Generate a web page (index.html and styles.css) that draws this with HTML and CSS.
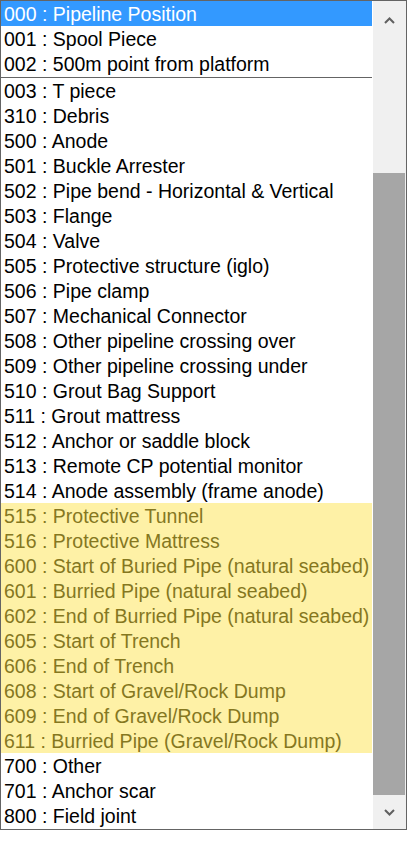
FILE: index.html
```html
<!DOCTYPE html>
<html lang="en">

<head>
    <meta charset="UTF-8">
    <meta name="viewport" content="width=device-width, initial-scale=1.0">
    <title>Event codes</title>
    <link rel="stylesheet" href="styles.css">
</head>

<body>
    <div class="listbox">
        <div class="items">
            <div class="top-group">
                <div class="row selected">000 : Pipeline Position</div>
                <div class="row">001 : Spool Piece</div>
                <div class="row">002 : 500m point from platform</div>
            </div>
            <div class="row">003 : T piece</div>
            <div class="row">310 : Debris</div>
            <div class="row">500 : Anode</div>
            <div class="row">501 : Buckle Arrester</div>
            <div class="row">502 : Pipe bend - Horizontal &amp; Vertical</div>
            <div class="row">503 : Flange</div>
            <div class="row">504 : Valve</div>
            <div class="row">505 : Protective structure (iglo)</div>
            <div class="row">506 : Pipe clamp</div>
            <div class="row">507 : Mechanical Connector</div>
            <div class="row">508 : Other pipeline crossing over</div>
            <div class="row">509 : Other pipeline crossing under</div>
            <div class="row">510 : Grout Bag Support</div>
            <div class="row">511 : Grout mattress</div>
            <div class="row">512 : Anchor or saddle block</div>
            <div class="row">513 : Remote CP potential monitor</div>
            <div class="row">514 : Anode assembly (frame anode)</div>
            <div class="row marked">515 : Protective Tunnel</div>
            <div class="row marked">516 : Protective Mattress</div>
            <div class="row marked">600 : Start of Buried Pipe (natural seabed)</div>
            <div class="row marked">601 : Burried Pipe (natural seabed)</div>
            <div class="row marked">602 : End of Burried Pipe (natural seabed)</div>
            <div class="row marked">605 : Start of Trench</div>
            <div class="row marked">606 : End of Trench</div>
            <div class="row marked">608 : Start of Gravel/Rock Dump</div>
            <div class="row marked">609 : End of Gravel/Rock Dump</div>
            <div class="row marked">611 : Burried Pipe (Gravel/Rock Dump)</div>
            <div class="row">700 : Other</div>
            <div class="row">701 : Anchor scar</div>
            <div class="row">800 : Field joint</div>
        </div>
        <div class="scrollbar">
            <div class="arrow up">
                <svg width="11" height="7" viewBox="0 0 11 7"><path d="M1 6 L5.5 1.5 L10 6" fill="none" stroke="#606060" stroke-width="2"/></svg>
            </div>
            <div class="track">
                <div class="thumb"></div>
            </div>
            <div class="arrow down">
                <svg width="11" height="7" viewBox="0 0 11 7"><path d="M1 1 L5.5 5.5 L10 1" fill="none" stroke="#606060" stroke-width="2"/></svg>
            </div>
        </div>
    </div>
</body>

</html>
```

FILE: styles.css
```css
* {
    margin: 0;
    padding: 0;
    box-sizing: border-box;
    font-family: "Liberation Sans", Arial, sans-serif;
}

body {
    background-color: #fff;
}

.listbox {
    display: flex;
    width: 407px;
    height: 830px;
    border: 1px solid #646464;
    background-color: #fff;
}

.items {
    width: 371px;
    display: flex;
    flex-direction: column;
}

.top-group {
    width: 372px;
    padding-bottom: 1px;
    border-bottom: 1px solid #646464;
}

.row {
    height: 25px;
    line-height: 23px;
    padding-top: 2px;
    padding-left: 3px;
    font-size: 19.5px;
    color: #000;
    white-space: nowrap;
}

.row.selected {
    background-color: #3399ff;
    color: #fff;
}

.row.marked {
    background-color: #fef1a6;
    color: #85771f;
}

.scrollbar {
    width: 34px;
    display: flex;
    flex-direction: column;
    border-left: 1px solid #fff;
    background-color: #f0f0f0;
    padding-right: 1px;
}

.arrow {
    height: 34px;
    display: flex;
    justify-content: center;
    align-items: center;
}

.arrow.up {
    align-items: flex-start;
    padding-top: 16px;
}

.track {
    flex: 1;
    display: flex;
    flex-direction: column;
    padding-top: 138px;
}

.thumb {
    flex: 1;
    background-color: #a6a6a6;
}
```
